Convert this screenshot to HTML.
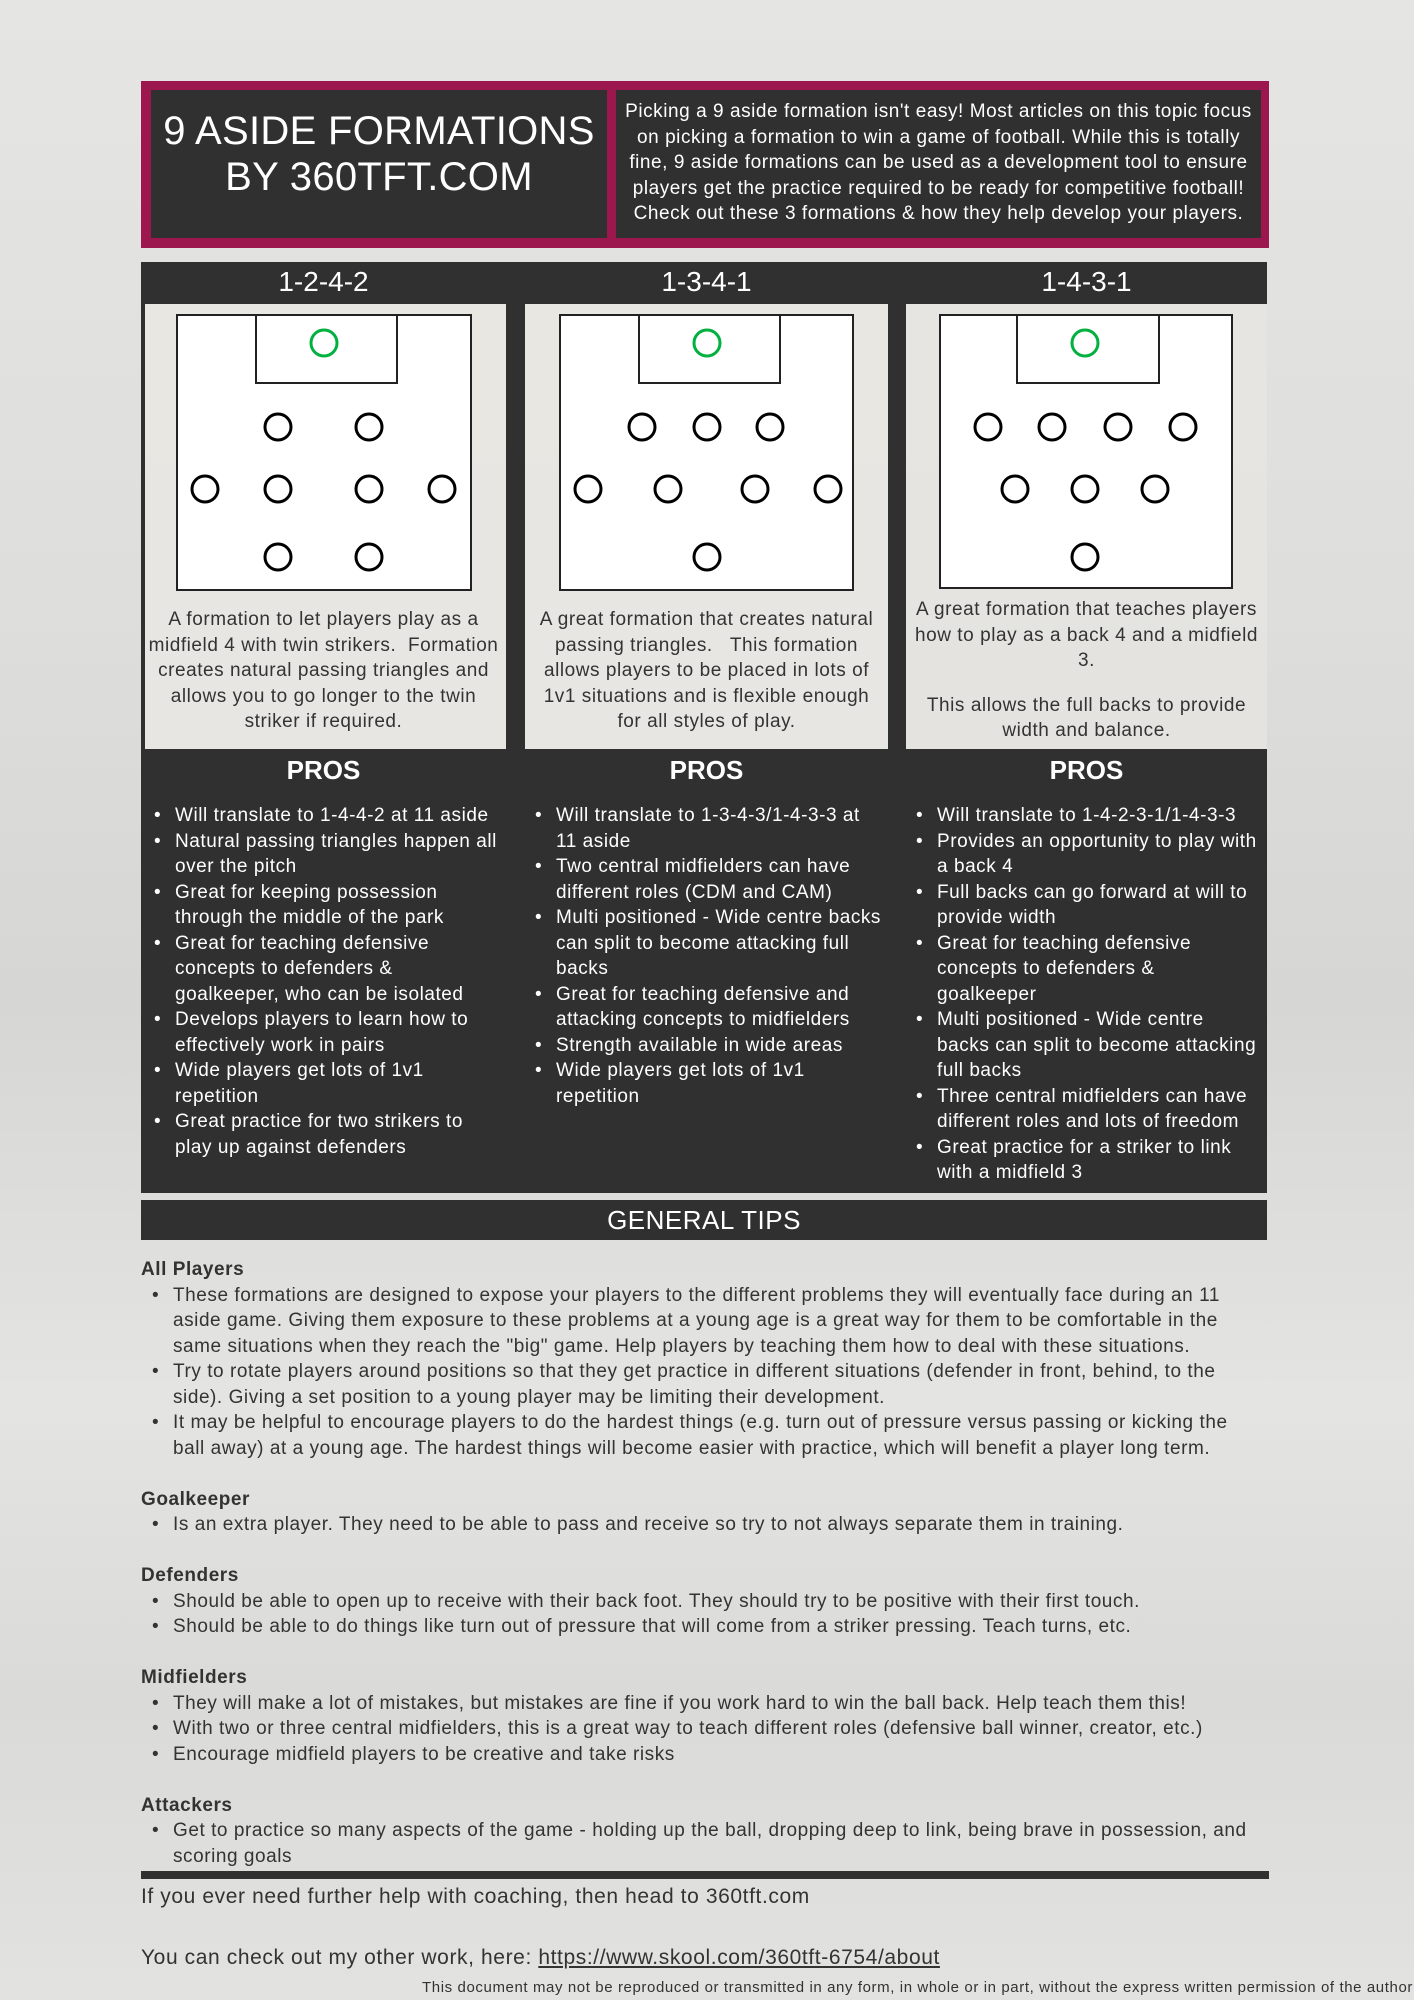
<!DOCTYPE html>
<html><head><meta charset="utf-8"><style>
*{margin:0;padding:0;box-sizing:border-box}
body{width:1414px;height:2000px;position:relative;overflow:hidden;font-family:"Liberation Sans",sans-serif;background:linear-gradient(180deg,#e5e5e3 0%,#dededc 30%,#d6d6d4 50%,#e4e4e2 70%,#dadad8 85%,#e2e2e0 100%);color:#333}
.a{position:absolute}
.dk{background:#303030}
.w{color:#fff}
.l{line-height:25.5px;font-size:19px;letter-spacing:0.55px;white-space:nowrap}
.c{text-align:center}
.b{position:relative}
.b::before{content:"•";position:absolute;left:-21px}
.h{font-weight:bold}
</style></head><body>
<!-- header -->
<div class="a" style="left:141px;top:81px;width:1128px;height:167px;background:#9b174d"></div>
<div class="a dk" style="left:151px;top:90px;width:456px;height:148px"></div>
<div class="a dk" style="left:616px;top:90px;width:645px;height:148px"></div>
<div class="a w c" style="left:151px;top:108px;width:456px;font-size:40px;line-height:46px;letter-spacing:0.3px;white-space:nowrap">9 ASIDE FORMATIONS<br>BY 360TFT.COM</div>
<div class="a w c l" style="left:616px;top:99px;width:645px">Picking a 9 aside formation isn't easy! Most articles on this topic focus<br>on picking a formation to win a game of football. While this is totally<br>fine, 9 aside formations can be used as a development tool to ensure<br>players get the practice required to be ready for competitive football!<br>Check out these 3 formations &amp; how they help develop your players.</div>

<!-- formation header -->
<div class="a dk" style="left:141px;top:262px;width:1126px;height:42px"></div>
<div class="a dk" style="left:506px;top:262px;width:19px;height:931px"></div>
<div class="a dk" style="left:888px;top:262px;width:18px;height:931px"></div>
<div class="a dk" style="left:141px;top:262px;width:4px;height:931px"></div>
<div class="a w c" style="left:141px;top:264px;width:365px;font-size:28px;line-height:36px">1-2-4-2</div>
<div class="a w c" style="left:525px;top:264px;width:363px;font-size:28px;line-height:36px">1-3-4-1</div>
<div class="a w c" style="left:906px;top:264px;width:361px;font-size:28px;line-height:36px">1-4-3-1</div>
<div class="a" style="left:145px;top:304px;width:361px;height:445px;background:rgba(234,232,227,0.85)"></div>
<div class="a" style="left:525px;top:304px;width:363px;height:445px;background:rgba(234,232,227,0.85)"></div>
<div class="a" style="left:906px;top:304px;width:361px;height:445px;background:rgba(234,232,227,0.6)"></div>

<svg class="a" style="left:0;top:0" width="1414" height="800" viewBox="0 0 1414 800">
<g fill="#fff" stroke="#222" stroke-width="2">
<rect x="177" y="315" width="294" height="275"/><rect x="560" y="315" width="293" height="275"/><rect x="940" y="315" width="292" height="273"/>
<rect x="256" y="315" width="141" height="68" fill="none"/><rect x="639" y="315" width="141" height="68" fill="none"/><rect x="1017" y="315" width="142" height="68" fill="none"/>
</g>
<g fill="none" stroke="#00b140" stroke-width="3">
<ellipse cx="324" cy="343" rx="13" ry="13"/><ellipse cx="707" cy="343" rx="13" ry="13"/><ellipse cx="1085" cy="343" rx="13" ry="13"/>
</g>
<g fill="none" stroke="#000" stroke-width="3">
<ellipse cx="278" cy="427" rx="13" ry="13"/><ellipse cx="369" cy="427" rx="13" ry="13"/>
<ellipse cx="205" cy="489" rx="13" ry="13"/><ellipse cx="278" cy="489" rx="13" ry="13"/><ellipse cx="369" cy="489" rx="13" ry="13"/><ellipse cx="442" cy="489" rx="13" ry="13"/>
<ellipse cx="278" cy="557" rx="13" ry="13"/><ellipse cx="369" cy="557" rx="13" ry="13"/>
<ellipse cx="642" cy="427" rx="13" ry="13"/><ellipse cx="707" cy="427" rx="13" ry="13"/><ellipse cx="770" cy="427" rx="13" ry="13"/>
<ellipse cx="588" cy="489" rx="13" ry="13"/><ellipse cx="668" cy="489" rx="13" ry="13"/><ellipse cx="755" cy="489" rx="13" ry="13"/><ellipse cx="828" cy="489" rx="13" ry="13"/>
<ellipse cx="707" cy="557" rx="13" ry="13"/>
<ellipse cx="988" cy="427" rx="13" ry="13"/><ellipse cx="1052" cy="427" rx="13" ry="13"/><ellipse cx="1118" cy="427" rx="13" ry="13"/><ellipse cx="1183" cy="427" rx="13" ry="13"/>
<ellipse cx="1015" cy="489" rx="13" ry="13"/><ellipse cx="1085" cy="489" rx="13" ry="13"/><ellipse cx="1155" cy="489" rx="13" ry="13"/>
<ellipse cx="1085" cy="557" rx="13" ry="13"/>
</g></svg>

<div class="a c l" style="left:141px;top:607px;width:365px">A formation to let players play as a<br>midfield 4 with twin strikers.&nbsp; Formation<br>creates natural passing triangles and<br>allows you to go longer to the twin<br>striker if required.</div>
<div class="a c l" style="left:525px;top:607px;width:363px">A great formation that creates natural<br>passing triangles.&nbsp;&nbsp; This formation<br>allows players to be placed in lots of<br>1v1 situations and is flexible enough<br>for all styles of play.</div>
<div class="a c l" style="left:906px;top:597px;width:361px">A great formation that teaches players<br>how to play as a back 4 and a midfield<br>3.<div style="height:19px"></div>This allows the full backs to provide<br>width and balance.</div>

<!-- pros -->
<div class="a dk" style="left:141px;top:749px;width:1126px;height:444px"></div>
<div class="a w c h" style="left:141px;top:754px;width:365px;font-size:26px;line-height:32px">PROS</div>
<div class="a w c h" style="left:525px;top:754px;width:363px;font-size:26px;line-height:32px">PROS</div>
<div class="a w c h" style="left:906px;top:754px;width:361px;font-size:26px;line-height:32px">PROS</div>
<div class="a w l" style="left:175px;top:803px">
<div class="b">Will translate to 1-4-4-2 at 11 aside</div>
<div class="b">Natural passing triangles happen all<br>over the pitch</div>
<div class="b">Great for keeping possession<br>through the middle of the park</div>
<div class="b">Great for teaching defensive<br>concepts to defenders &amp;<br>goalkeeper, who can be isolated</div>
<div class="b">Develops players to learn how to<br>effectively work in pairs</div>
<div class="b">Wide players get lots of 1v1<br>repetition</div>
<div class="b">Great practice for two strikers to<br>play up against defenders</div></div>
<div class="a w l" style="left:556px;top:803px">
<div class="b">Will translate to 1-3-4-3/1-4-3-3 at<br>11 aside</div>
<div class="b">Two central midfielders can have<br>different roles (CDM and CAM)</div>
<div class="b">Multi positioned - Wide centre backs<br>can split to become attacking full<br>backs</div>
<div class="b">Great for teaching defensive and<br>attacking concepts to midfielders</div>
<div class="b">Strength available in wide areas</div>
<div class="b">Wide players get lots of 1v1<br>repetition</div></div>
<div class="a w l" style="left:937px;top:803px">
<div class="b">Will translate to 1-4-2-3-1/1-4-3-3</div>
<div class="b">Provides an opportunity to play with<br>a back 4</div>
<div class="b">Full backs can go forward at will to<br>provide width</div>
<div class="b">Great for teaching defensive<br>concepts to defenders &amp;<br>goalkeeper</div>
<div class="b">Multi positioned - Wide centre<br>backs can split to become attacking<br>full backs</div>
<div class="b">Three central midfielders can have<br>different roles and lots of freedom</div>
<div class="b">Great practice for a striker to link<br>with a midfield 3</div></div>

<!-- general tips -->
<div class="a dk w c" style="left:141px;top:1200px;width:1126px;height:40px;font-size:26px;line-height:40px;letter-spacing:0.5px">GENERAL TIPS</div>
<div class="a l" style="left:141px;top:1257px">
<div class="h">All Players</div>
<div style="padding-left:32px">
<div class="b">These formations are designed to expose your players to the different problems they will eventually face during an 11<br>aside game. Giving them exposure to these problems at a young age is a great way for them to be comfortable in the<br>same situations when they reach the "big" game. Help players by teaching them how to deal with these situations.</div>
<div class="b">Try to rotate players around positions so that they get practice in different situations (defender in front, behind, to the<br>side). Giving a set position to a young player may be limiting their development.</div>
<div class="b">It may be helpful to encourage players to do the hardest things (e.g. turn out of pressure versus passing or kicking the<br>ball away) at a young age. The hardest things will become easier with practice, which will benefit a player long term.</div></div>
<div style="height:25.5px"></div>
<div class="h">Goalkeeper</div>
<div style="padding-left:32px"><div class="b">Is an extra player. They need to be able to pass and receive so try to not always separate them in training.</div></div>
<div style="height:25.5px"></div>
<div class="h">Defenders</div>
<div style="padding-left:32px"><div class="b">Should be able to open up to receive with their back foot. They should try to be positive with their first touch.</div>
<div class="b">Should be able to do things like turn out of pressure that will come from a striker pressing. Teach turns, etc.</div></div>
<div style="height:25.5px"></div>
<div class="h">Midfielders</div>
<div style="padding-left:32px"><div class="b">They will make a lot of mistakes, but mistakes are fine if you work hard to win the ball back. Help teach them this!</div>
<div class="b">With two or three central midfielders, this is a great way to teach different roles (defensive ball winner, creator, etc.)</div>
<div class="b">Encourage midfield players to be creative and take risks</div></div>
<div style="height:25.5px"></div>
<div class="h">Attackers</div>
<div style="padding-left:32px"><div class="b">Get to practice so many aspects of the game - holding up the ball, dropping deep to link, being brave in possession, and<br>scoring goals</div></div>
</div>

<div class="a dk" style="left:141px;top:1871px;width:1128px;height:8px"></div>
<div class="a" style="left:141px;top:1885px;font-size:21px;line-height:24px;letter-spacing:0.6px;white-space:nowrap">If you ever need further help with coaching, then head to 360tft.com</div>
<div class="a" style="left:141px;top:1946px;font-size:21px;line-height:24px;letter-spacing:0.6px;white-space:nowrap">You can check out my other work, here: <u>https://www.skool.com/360tft-6754/about</u></div>
<div class="a" style="right:1px;top:1979px;font-size:15px;line-height:18px;letter-spacing:0.6px;white-space:nowrap">This document may not be reproduced or transmitted in any form, in whole or in part, without the express written permission of the author</div>
</body></html>
